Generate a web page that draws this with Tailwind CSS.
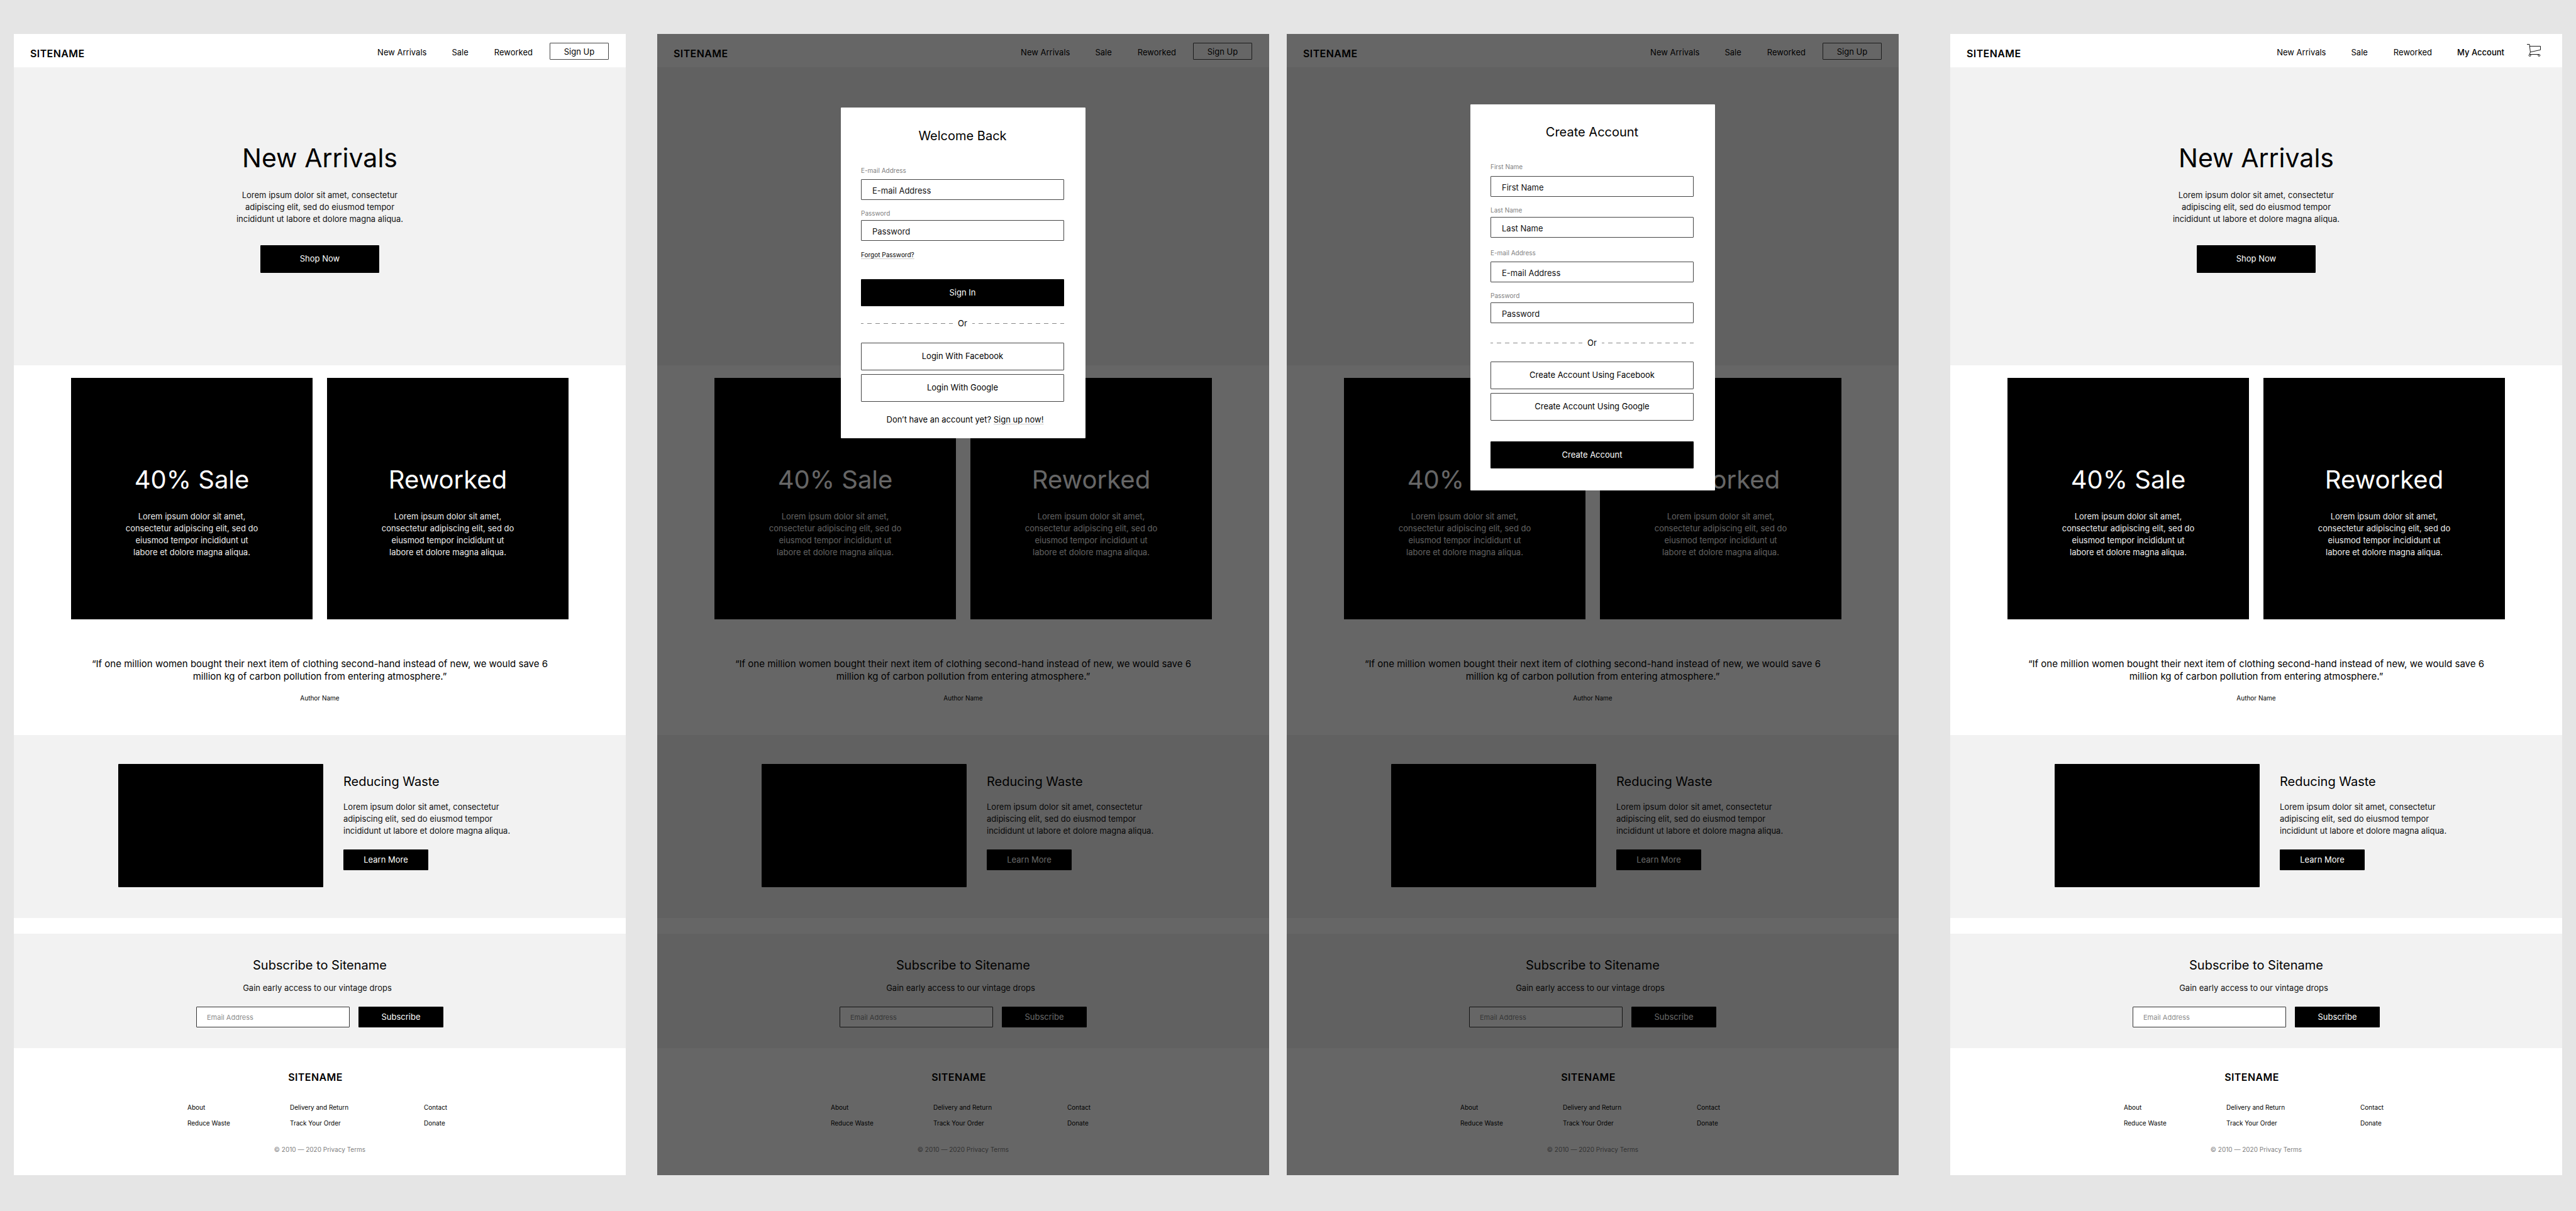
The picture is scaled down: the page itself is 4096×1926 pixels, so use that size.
<!DOCTYPE html>
<html lang="en">
<head>
<meta charset="utf-8">
<meta name="viewport" content="width=device-width, initial-scale=1">
<title>Sitename</title>
<script src="https://cdn.jsdelivr.net/npm/@tailwindcss/browser@4"></script>
</head>
<body class="min-h-screen bg-[#e5e5e5] font-[Inter,sans-serif] text-black">

<!-- Navigation for visitors -->
<template id="guest-header">
  <header class="flex h-[53px] items-center justify-between pr-[27px] pl-[26px]">
    <a href="#" class="pt-2 text-base leading-5 font-semibold tracking-wide">SITENAME</a>
    <nav class="flex items-center text-[13px] leading-5">
      <a href="#" class="mt-1 mr-10">New Arrivals</a>
      <a href="#" class="mt-1 mr-[41px]">Sale</a>
      <a href="#" class="mt-1 mr-[27px]">Reworked</a>
      <button type="button" class="mt-0.5 flex h-[27px] w-[94px] items-center justify-center rounded-[1px] border border-[#444]">Sign Up</button>
    </nav>
  </header>
</template>

<!-- Navigation for signed-in customers -->
<template id="member-header">
  <header class="flex h-[53px] items-center justify-between pr-[34px] pl-[26px]">
    <a href="#" class="pt-2 text-base leading-5 font-semibold tracking-wide">SITENAME</a>
    <nav class="flex items-center text-[13px] leading-5">
      <a href="#" class="mt-1 mr-10">New Arrivals</a>
      <a href="#" class="mt-1 mr-[41px]">Sale</a>
      <a href="#" class="mt-1 mr-10">Reworked</a>
      <a href="#" class="mt-1 mr-9 font-medium">My Account</a>
      <a href="#" aria-label="Cart" class="mb-0.5">
        <svg class="block h-5 w-[22px]" viewBox="0 0 22 20" fill="none" stroke="#000" stroke-width=".9">
          <path d="M0 .5H4L5.4 12.8 4.4 16"/>
          <path d="M4.3 3.5H21.5V9.3L5.4 12.8"/>
          <path d="M4.4 16.5H19"/>
          <circle cx="4.6" cy="18" r="1.5"/>
          <circle cx="19.3" cy="18" r="1.5"/>
        </svg>
      </a>
    </nav>
  </header>
</template>

<!-- Home page body shared by every frame -->
<template id="home">
  <main>
    <section class="flex flex-col items-center bg-[#f2f2f2] pt-[120px] pb-[147px] text-center">
      <h1 class="text-[41px] leading-[48px]">New Arrivals</h1>
      <p class="mt-[26px] text-[13px] leading-[19px] text-[#111]">Lorem ipsum dolor sit amet, consectetur<br>adipiscing elit, sed do eiusmod tempor<br>incididunt ut labore et dolore magna aliqua.</p>
      <button type="button" class="mt-8 h-11 w-[189px] rounded-[1px] bg-black text-[13px] text-white">Shop Now</button>
    </section>

    <section class="grid grid-cols-2 gap-[23px] px-[91px] pt-5 text-center text-white">
      <a href="#" class="block bg-black pt-[138px] pb-[97px]">
        <h2 class="text-[40px] leading-[48px]">40% Sale</h2>
        <p class="mt-[25px] text-[13px] leading-[19px] text-[#eee]">Lorem ipsum dolor sit amet,<br>consectetur adipiscing elit, sed do<br>eiusmod tempor incididunt ut<br>labore et dolore magna aliqua.</p>
      </a>
      <a href="#" class="block bg-black pt-[138px] pb-[97px]">
        <h2 class="text-[40px] leading-[48px]">Reworked</h2>
        <p class="mt-[25px] text-[13px] leading-[19px] text-[#eee]">Lorem ipsum dolor sit amet,<br>consectetur adipiscing elit, sed do<br>eiusmod tempor incididunt ut<br>labore et dolore magna aliqua.</p>
      </a>
    </section>

    <figure class="pt-[61px] pb-[51px] text-center">
      <blockquote class="text-[15px] leading-5">“If one million women bought their next item of clothing second-hand instead of new, we would save 6<br>million kg of carbon pollution from entering atmosphere.”</blockquote>
      <figcaption class="mt-4 text-[10px] leading-4">Author Name</figcaption>
    </figure>

    <section class="flex gap-8 bg-[#f2f2f2] pt-[46px] pb-[49px] pl-[166px]">
      <div class="h-[196px] w-[326px] rounded-[1px] bg-black"></div>
      <div class="pt-3.5">
        <h2 class="text-xl leading-7">Reducing Waste</h2>
        <p class="mt-[17px] text-[13px] leading-[19px] text-[#111]">Lorem ipsum dolor sit amet, consectetur<br>adipiscing elit, sed do eiusmod tempor<br>incididunt ut labore et dolore magna aliqua.</p>
        <button type="button" class="mt-5 h-[33px] w-[135px] rounded-[1px] bg-black text-[13px] text-white">Learn More</button>
      </div>
    </section>

    <section class="mt-[25px] flex flex-col items-center bg-[#f2f2f2] pt-9 pb-[33px]">
      <h2 class="text-xl leading-7">Subscribe to Sitename</h2>
      <p class="mt-3 pr-2 text-[13px] leading-5 text-[#111]">Gain early access to our vintage drops</p>
      <form class="mt-5 flex gap-3.5">
        <input type="email" aria-label="Email Address" placeholder="Email Address" class="h-[33px] w-[244px] rounded-[1px] border border-[#333] bg-white px-4 text-[11px] placeholder:text-[#8c8c8c]">
        <button type="button" class="h-[33px] w-[135px] rounded-[1px] bg-black text-[13px] text-white">Subscribe</button>
      </form>
    </section>
  </main>
  <footer class="pt-9 pb-[33px]">
    <div class="pr-3.5 text-center text-base leading-5 font-semibold tracking-wide">SITENAME</div>
    <nav class="mt-[30px] grid grid-cols-[163px_213px_auto] gap-y-[9px] pl-[276px] text-[10px] leading-4">
      <a href="#">About</a>
      <a href="#">Delivery and Return</a>
      <a href="#">Contact</a>
      <a href="#">Reduce Waste</a>
      <a href="#">Track Your Order</a>
      <a href="#">Donate</a>
    </nav>
    <p class="mt-[26px] text-center text-[10px] leading-4 text-[#808080]">© 2010 — 2020 Privacy Terms</p>
  </footer>
</template>

<!-- Divider between sign-in methods -->
<template id="or-divider">
  <div class="flex items-center gap-2 text-[13px] leading-5">
    <svg class="h-px flex-1" aria-hidden="true"><line x1="0" y1="0.5" x2="100%" y2="0.5" stroke="#888" stroke-dasharray="7 6" stroke-dashoffset="3"/></svg>
    <span>Or</span>
    <svg class="h-px flex-1" aria-hidden="true"><line x1="0" y1="0.5" x2="100%" y2="0.5" stroke="#888" stroke-dasharray="7 6" stroke-dashoffset="3"/></svg>
  </div>
</template>

<div class="flex items-start px-[22px] pt-[54px]">

  <article class="flex-1 bg-white">
    <slot name="guest-header"></slot>
    <slot name="home"></slot>
  </article>

  <article class="relative ml-[50px] flex-1 bg-white">
    <slot name="guest-header"></slot>
    <slot name="home"></slot>
    <div class="absolute inset-0 flex items-start justify-center bg-black/60 pt-[117px]">
      <form class="flex w-[389px] flex-col rounded-[1px] bg-white pt-[31px] pr-[34px] pb-5 pl-8" aria-label="Sign in">
        <h2 class="text-center text-xl leading-7">Welcome Back</h2>
        <label for="login-email" class="mt-[33px] text-[10px] leading-4 text-[#808080]">E-mail Address</label>
        <input id="login-email" type="email" placeholder="E-mail Address" class="mt-1.5 h-[33px] rounded-[1px] border border-[#444] px-[17px] pt-[3px] text-[13px] placeholder:text-[#111]">
        <label for="login-password" class="mt-[13px] text-[10px] leading-4 text-[#808080]">Password</label>
        <input id="login-password" type="password" placeholder="Password" class="mt-[3px] h-[33px] rounded-[1px] border border-[#444] px-[17px] pt-[3px] text-[13px] placeholder:text-[#111]">
        <a href="#" class="mt-3.5 self-start text-[10px] leading-4 underline decoration-[#ccc] underline-offset-2">Forgot Password?</a>
        <button type="button" class="mt-[31px] h-[43px] rounded-[1px] bg-black text-[13px] text-white">Sign In</button>
        <div class="mt-[17px]"><slot name="or-divider"></slot></div>
        <button type="button" class="mt-[21px] h-11 rounded-[1px] border border-[#444] text-[13px]">Login With Facebook</button>
        <button type="button" class="mt-1.5 h-11 rounded-[1px] border border-[#444] text-[13px]">Login With Google</button>
        <p class="mt-[18px] pl-2 text-center text-[13px] leading-5">Don’t have an account yet? <a href="#" class="underline decoration-[#ccc] underline-offset-2">Sign up now!</a></p>
      </form>
    </div>
  </article>

  <article class="relative ml-7 flex-1 bg-white">
    <slot name="guest-header"></slot>
    <slot name="home"></slot>
    <div class="absolute inset-0 flex items-start justify-center bg-black/60 pt-28">
      <form class="flex w-[389px] flex-col rounded-[1px] bg-white pt-[30px] pr-[34px] pb-[35px] pl-8" aria-label="Create account">
        <h2 class="text-center text-xl leading-7">Create Account</h2>
        <label for="first-name" class="mt-[33px] text-[10px] leading-4 text-[#808080]">First Name</label>
        <input id="first-name" type="text" placeholder="First Name" class="mt-[7px] h-[33px] rounded-[1px] border border-[#444] px-[17px] pt-[3px] text-[13px] placeholder:text-[#111]">
        <label for="last-name" class="mt-[13px] text-[10px] leading-4 text-[#808080]">Last Name</label>
        <input id="last-name" type="text" placeholder="Last Name" class="mt-[3px] h-[33px] rounded-[1px] border border-[#444] px-[17px] pt-[3px] text-[13px] placeholder:text-[#111]">
        <label for="new-email" class="mt-4 text-[10px] leading-4 text-[#808080]">E-mail Address</label>
        <input id="new-email" type="email" placeholder="E-mail Address" class="mt-1.5 h-[33px] rounded-[1px] border border-[#444] px-[17px] pt-[3px] text-[13px] placeholder:text-[#111]">
        <label for="new-password" class="mt-[13px] text-[10px] leading-4 text-[#808080]">Password</label>
        <input id="new-password" type="password" placeholder="Password" class="mt-[3px] h-[33px] rounded-[1px] border border-[#444] px-[17px] pt-[3px] text-[13px] placeholder:text-[#111]">
        <div class="mt-[21px]"><slot name="or-divider"></slot></div>
        <button type="button" class="mt-5 h-11 rounded-[1px] border border-[#444] text-[13px]">Create Account Using Facebook</button>
        <button type="button" class="mt-1.5 h-11 rounded-[1px] border border-[#444] text-[13px]">Create Account Using Google</button>
        <button type="button" class="mt-[33px] h-[43px] rounded-[1px] bg-black text-[13px] text-white">Create Account</button>
      </form>
    </div>
  </article>

  <article class="ml-[82px] flex-1 bg-white">
    <slot name="member-header"></slot>
    <slot name="home"></slot>
  </article>
</div>

<script>
  document.querySelectorAll('slot[name]').forEach(function (slot) {
    slot.replaceWith(document.getElementById(slot.getAttribute('name')).content.cloneNode(true));
  });
</script>
</body>
</html>
